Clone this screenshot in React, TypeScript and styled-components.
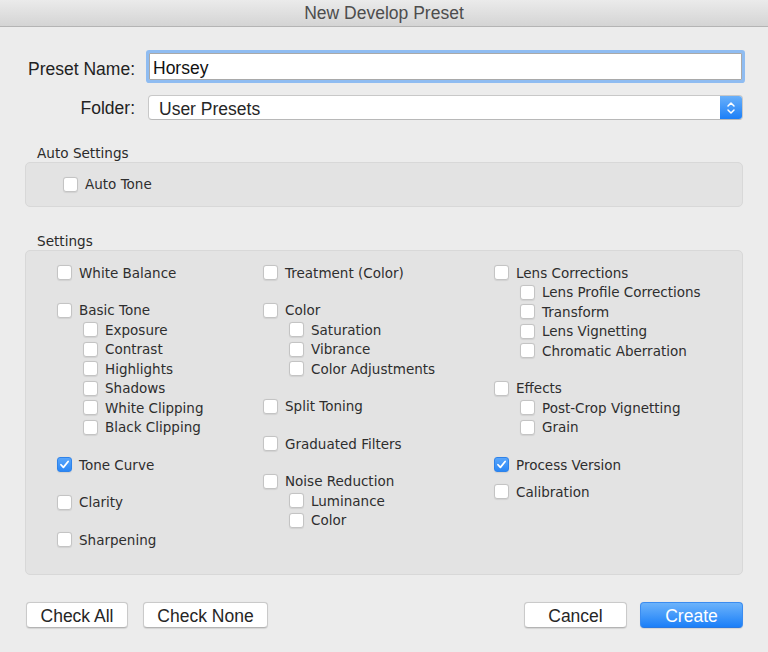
import React from "react";
import styled, { createGlobalStyle } from "styled-components";

const GlobalStyle = createGlobalStyle`
  html, body { margin: 0; padding: 0; background: #ececec; }
  * { box-sizing: border-box; }
`;

const Dialog = styled.div`
  width: 768px;
  height: 652px;
  background: #ececec;
  display: flex;
  flex-direction: column;
  overflow: hidden;
  font-family: "Liberation Sans", Arial, sans-serif;
`;

const TitleBar = styled.div`
  height: 27px;
  flex: none;
  display: flex;
  align-items: center;
  justify-content: center;
  padding-top: 1px;
  background: linear-gradient(#ebebeb, #d4d4d4);
  border-bottom: 1px solid #b4b4b4;
  color: #4d4d4d;
  font-size: 17.5px;
`;

const Body = styled.div`
  padding: 26px 25px 0 25px;
  display: flex;
  flex-direction: column;
`;

const FormGrid = styled.div`
  display: grid;
  grid-template-columns: 110px 1fr;
  column-gap: 13px;
  row-gap: 15px;
`;

const FieldLabel = styled.label<{ $offset?: number }>`
  text-align: right;
  align-self: center;
  font-size: 17.5px;
  color: #222;
  padding-top: ${(p) => p.$offset ?? 0}px;
`;

const TextInput = styled.div`
  height: 27px;
  margin: 0 1px;
  background: #fff;
  border: 1px solid #a9a9a9;
  box-shadow: 0 0 0 3px #8fbcf1;
  border-radius: 1px;
  display: flex;
  align-items: center;
  padding: 3px 0 0 3px;
  font-size: 17.5px;
  color: #111;
`;

const Select = styled.div`
  height: 25px;
  background: #fff;
  border: 1px solid #c8c8c8;
  border-bottom-color: #b8b8b8;
  border-radius: 4px;
  display: flex;
  align-items: center;
  overflow: hidden;
  font-size: 17.5px;
  color: #262626;
`;

const SelectText = styled.span`
  flex: 1;
  padding: 3px 0 0 10px;
`;

const Stepper = styled.div`
  width: 22px;
  align-self: stretch;
  background: linear-gradient(#69b0fa, #1c7ff7);
  display: flex;
  align-items: center;
  justify-content: center;
`;

const SectionLabel = styled.div<{ $top: number }>`
  margin-top: ${(p) => p.$top}px;
  padding-left: 12px;
  font-family: "DejaVu Sans", Verdana, sans-serif;
  font-size: 13.6px;
  line-height: 18px;
  color: #2a2a2a;
`;

const GroupBox = styled.div`
  background: #e3e3e3;
  border: 1px solid #d8d8d8;
  border-radius: 5px;
`;

const AutoBox = styled(GroupBox)`
  height: 45px;
  padding: 11.5px 0 0 37px;
`;

const SettingsBox = styled(GroupBox)`
  height: 325px;
  padding: 12px 0 0 31px;
  display: grid;
  grid-template-columns: 206px 231px 1fr;
  align-items: start;
`;

const Column = styled.div`
  display: flex;
  flex-direction: column;
`;

const Group = styled.div<{ $gap: number }>`
  display: flex;
  flex-direction: column;
  margin-bottom: ${(p) => p.$gap}px;
`;

const Row = styled.div<{ $sub?: boolean }>`
  height: 19.5px;
  display: flex;
  align-items: center;
  gap: 7px;
  padding-left: ${(p) => (p.$sub ? 26 : 0)}px;
  font-family: "DejaVu Sans", Verdana, sans-serif;
  font-size: 13.5px;
  color: #2e2e2e;
  white-space: nowrap;
`;

const Box = styled.span<{ $checked?: boolean }>`
  width: 15px;
  height: 15px;
  flex: none;
  border-radius: 3px;
  display: flex;
  align-items: center;
  justify-content: center;
  background: ${(p) => (p.$checked ? "linear-gradient(#5aa6fb, #2a87f5)" : "#fff")};
  border: 1px solid ${(p) => (p.$checked ? "#2f83ea" : "#c4c4c4")};
  box-shadow: 0 0.5px 1px rgba(0, 0, 0, 0.08);
`;

const ButtonBar = styled.div`
  margin-top: 27px;
  display: flex;
  justify-content: space-between;
`;

const ButtonGroup = styled.div<{ $gap: number; $pl?: number }>`
  display: flex;
  gap: ${(p) => p.$gap}px;
  padding-left: ${(p) => p.$pl ?? 0}px;
`;

const Button = styled.button<{ $w: number; $primary?: boolean }>`
  width: ${(p) => p.$w}px;
  height: 26px;
  padding: 2px 0 0;
  border-radius: 4px;
  font-family: "Liberation Sans", Arial, sans-serif;
  font-size: 17.5px;
  color: ${(p) => (p.$primary ? "#fff" : "#262626")};
  background: ${(p) => (p.$primary ? "linear-gradient(#6cb3fb, #1b7ff8)" : "#fff")};
  border: 1px solid ${(p) => (p.$primary ? "#3b8cf0" : "#cacaca")};
  border-bottom-color: ${(p) => (p.$primary ? "#2a78e0" : "#b4b4b4")};
  box-shadow: 0 0.5px 1px rgba(0, 0, 0, 0.1);
`;

const Check = ({ label, checked, sub }: { label: string; checked?: boolean; sub?: boolean }) => (
  <Row $sub={sub}>
    <Box $checked={checked}>
      {checked && (
        <svg width="11" height="11" viewBox="0 0 10 10">
          <path d="M1.8 5.2 L4 7.6 L8.3 2.3" fill="none" stroke="#fff" strokeWidth="1.6" strokeLinecap="round" strokeLinejoin="round" />
        </svg>
      )}
    </Box>
    <span>{label}</span>
  </Row>
);

type Item = { label: string; checked?: boolean; subs?: string[]; gap?: number };

const columns: Item[][] = [
  [
    { label: "White Balance" },
    { label: "Basic Tone", subs: ["Exposure", "Contrast", "Highlights", "Shadows", "White Clipping", "Black Clipping"] },
    { label: "Tone Curve", checked: true },
    { label: "Clarity" },
    { label: "Sharpening" },
  ],
  [
    { label: "Treatment (Color)" },
    { label: "Color", subs: ["Saturation", "Vibrance", "Color Adjustments"] },
    { label: "Split Toning" },
    { label: "Graduated Filters" },
    { label: "Noise Reduction", subs: ["Luminance", "Color"] },
  ],
  [
    { label: "Lens Corrections", subs: ["Lens Profile Corrections", "Transform", "Lens Vignetting", "Chromatic Aberration"] },
    { label: "Effects", subs: ["Post-Crop Vignetting", "Grain"] },
    { label: "Process Version", checked: true, gap: 7.5 },
    { label: "Calibration" },
  ],
];

export default function App() {
  return (
    <>
      <GlobalStyle />
      <Dialog>
        <TitleBar>New Develop Preset</TitleBar>
        <Body>
          <FormGrid>
            <FieldLabel $offset={6}>Preset Name:</FieldLabel>
            <TextInput>Horsey</TextInput>
            <FieldLabel $offset={2}>Folder:</FieldLabel>
            <Select>
              <SelectText>User Presets</SelectText>
              <Stepper>
                <svg width="10" height="16" viewBox="0 0 10 16">
                  <path d="M2 6 L5 3 L8 6 M2 10 L5 13 L8 10" fill="none" stroke="#fff" strokeWidth="1.5" strokeLinecap="round" strokeLinejoin="round" />
                </svg>
              </Stepper>
            </Select>
          </FormGrid>

          <SectionLabel $top={24}>Auto Settings</SectionLabel>
          <AutoBox>
            <Check label="Auto Tone" />
          </AutoBox>

          <SectionLabel $top={25}>Settings</SectionLabel>
          <SettingsBox>
            {columns.map((col, ci) => (
              <Column key={ci}>
                {col.map((item) => (
                  <Group key={item.label} $gap={item.gap ?? 18}>
                    <Check label={item.label} checked={item.checked} />
                    {item.subs?.map((s) => (
                      <Check key={s} label={s} sub />
                    ))}
                  </Group>
                ))}
              </Column>
            ))}
          </SettingsBox>

          <ButtonBar>
            <ButtonGroup $gap={15} $pl={1}>
              <Button $w={102}>Check All</Button>
              <Button $w={125}>Check None</Button>
            </ButtonGroup>
            <ButtonGroup $gap={13}>
              <Button $w={103}>Cancel</Button>
              <Button $w={103} $primary>Create</Button>
            </ButtonGroup>
          </ButtonBar>
        </Body>
      </Dialog>
    </>
  );
}
